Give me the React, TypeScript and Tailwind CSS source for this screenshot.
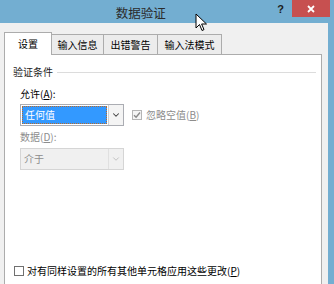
import { ChevronDown } from 'lucide-react'

const font = { fontFamily: '"Noto Sans CJK SC", "Noto Sans", sans-serif' }

const tabs = ['输入信息', '出错警告', '输入法模式']

function Cursor() {
  return (
    <svg className="absolute left-[195px] top-[13px]" width="13" height="19" viewBox="0 0 13 19">
      <path
        d="M1 1 L1 15 L4.5 11.5 L7 17.5 L9 16.6 L6.6 11 L11.5 11 Z"
        fill="#ffffff"
        stroke="#000000"
        strokeWidth="1"
        strokeLinejoin="round"
      />
    </svg>
  )
}

export default function App() {
  return (
    <div
      className="relative w-[334px] h-[284px] overflow-hidden bg-[#73aed1] flex flex-col text-[10px] leading-[12px] text-black"
      style={font}
    >
      {/* Title bar */}
      <div className="h-[23px] shrink-0 flex items-start">
        <div className="flex-1 flex justify-center pt-[5px] pl-[4px]">
          <span className="text-[12.5px] leading-[16px] text-[#2b2b2b]">数据验证</span>
        </div>
        <span className="mt-[2px] mr-[8px] text-[11px] leading-[14px] font-bold text-[#1b1b1b]" style={{ fontFamily: '"Liberation Sans", sans-serif' }}>
          ?
        </span>
        <div className="w-[38px] h-[17px] mr-[4px] bg-[#c75050] flex items-center justify-center">
          <svg width="8" height="8" viewBox="0 0 8 8">
            <path d="M1 1 L7 7 M7 1 L1 7" stroke="#ffffff" strokeWidth="1.8" />
          </svg>
        </div>
      </div>
      <Cursor />

      {/* Body */}
      <div className="flex-1 mr-[6px] bg-[#f0f0f0] pl-[4px] pr-[6px] pt-[9px] flex flex-col">
        {/* Tabs */}
        <div className="flex items-end h-[23px] relative z-10">
          <div className="w-[48px] h-[23px] bg-white border border-b-0 border-[#acacac] flex items-center justify-center">
            设置
          </div>
          {tabs.map((t, i) => (
            <div
              key={t}
              className={`h-[20px] mb-px px-[5px] bg-[#ececec] border border-b-0 border-[#acacac] flex items-center justify-center ${
                i === 0 ? 'w-[52px] border-l-0' : i === 1 ? 'w-[54px] border-l-0' : 'w-[64px] border-l-0'
              }`}
            >
              {t}
            </div>
          ))}
        </div>

        {/* Panel */}
        <div className="flex-1 -mt-px bg-white border border-b-0 border-[#acacac] flex flex-col pl-[8px] pb-[7px]">
          <div className="mt-[11px] h-[12px] flex items-center">
            <span className="text-[#1e1e1e]">验证条件</span>
            <div className="flex-1 h-px bg-[#dcdcdc] ml-[4px] mr-[5px]" />
          </div>

          <div className="ml-[7px] mt-[10px] h-[12px]">
            允许(<span className="underline">A</span>):
          </div>

          <div className="ml-[7px] mt-[4px] flex items-center">
            <div className="w-[104px] h-[22px] border border-[#abadb3] bg-white flex">
              <div className="flex-1 p-px">
                <div className="h-full bg-[#3399ff] border border-dotted border-[#b86a2a] text-white flex items-center pl-[2px]">
                  任何值
                </div>
              </div>
              <div className="w-[15px] border-l border-[#d0d0d0] bg-[#f4f4f4] flex items-center justify-center">
                <ChevronDown size={10} strokeWidth={2.5} color="#3c3c3c" />
              </div>
            </div>
            <div className="ml-[8px] w-[10px] h-[10px] border border-[#b5b5b5] bg-[#f4f4f4] flex items-center justify-center">
              <svg width="8" height="8" viewBox="0 0 8 8">
                <path d="M1 4.2 L3.1 6.3 L7 1.5" stroke="#8a8a8a" strokeWidth="1.4" fill="none" />
              </svg>
            </div>
            <span className="ml-[4px] text-[#8d8d8d]">
              忽略空值(<span className="underline">B</span>)
            </span>
          </div>

          <div className="ml-[7px] mt-[5px] h-[12px] text-[#8d8d8d]">
            数据(<span className="underline">D</span>):
          </div>

          <div className="ml-[7px] mt-[5px] w-[104px] h-[22px] border border-[#d5d5d5] bg-[#f0f0f0] flex">
            <div className="flex-1 flex items-center pl-[3px] text-[#8d8d8d]">介于</div>
            <div className="w-[15px] border-l border-[#e0e0e0] flex items-center justify-center">
              <ChevronDown size={10} strokeWidth={2} color="#b8b8b8" />
            </div>
          </div>

          <div className="flex-1" />

          <div className="ml-px h-[12px] flex items-center">
            <div className="w-[10px] h-[10px] border border-[#707070] bg-white" />
            <span className="ml-[3px]">
              对有同样设置的所有其他单元格应用这些更改(<span className="underline">P</span>)
            </span>
          </div>
        </div>
      </div>
    </div>
  )
}
